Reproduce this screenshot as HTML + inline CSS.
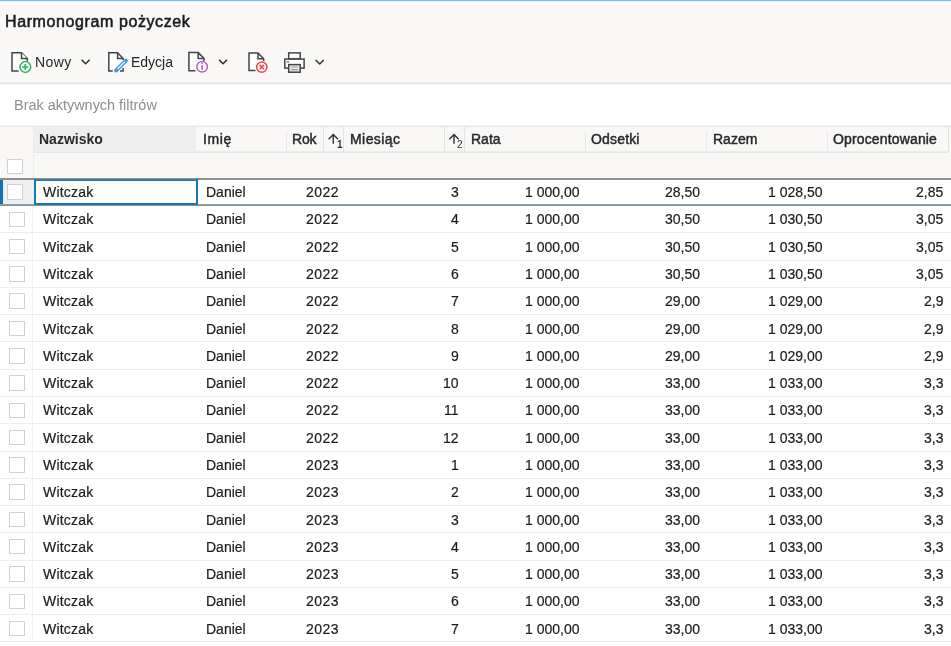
<!DOCTYPE html>
<html><head><meta charset="utf-8"><style>
*{margin:0;padding:0;box-sizing:border-box}
html,body{width:951px;height:646px;overflow:hidden;background:#f9f8f7;font-family:"Liberation Sans",sans-serif;color:#262626}
.a{position:absolute}
.t{position:absolute;white-space:pre;font-size:14px;line-height:16px;will-change:transform}
.r{text-align:right}
.hl{position:absolute;height:1px}
.vl{position:absolute;width:1px}
.cb{position:absolute;width:15.5px;height:15.5px;border:1.5px solid #d0d0d0;background:#fff;border-radius:0.5px}
.hd{font-weight:700;color:#2a2a2a}
.hm{color:#282828;-webkit-text-stroke:0.45px #282828}
.d{transform:scaleY(1.07);transform-origin:0 7.75px;color:#1c1c1c;-webkit-text-stroke:0.2px #1c1c1c}
</style></head>
<body>
<div class="a" style="left:0;top:0;width:951px;height:1px;background:#6fbee6"></div><div class="a" style="left:0;top:1px;width:951px;height:1px;background:#eaf3f8"></div><div class="t" style="left:4.8px;top:13px;font-size:16px;line-height:18px;letter-spacing:0.6px;color:#1b1b1b;-webkit-text-stroke:0.55px #1b1b1b">Harmonogram pożyczek</div><div class="hl" style="left:0;top:82px;width:951px;background:#f0f0ef"></div><div class="hl" style="left:0;top:83px;width:951px;background:#e1e1e1"></div><div class="a" style="left:0;top:84px;width:951px;height:41px;background:#fff"></div><div class="hl" style="left:0;top:84px;width:951px;background:#f7f7f7"></div><div class="t" style="left:14px;top:96.5px;font-size:14.45px;color:#8d8d8d;transform:scaleY(1.07);transform-origin:0 8px">Brak aktywnych filtrów</div><div class="t" style="left:34.5px;top:54px;color:#262626;letter-spacing:0.4px">Nowy</div><div class="t" style="left:131px;top:54px;color:#262626">Edycja</div><div class="hl" style="left:0;top:125px;width:951px;background:#f3f3f3"></div><div class="hl" style="left:0;top:126px;width:951px;background:#e8e8e8"></div><div class="a" style="left:34px;top:127px;width:162px;height:25px;background:#eeeeee"></div><div class="hl" style="left:34px;top:151px;width:914px;background:#ececeb"></div><div class="hl" style="left:34px;top:152px;width:914px;background:#e6e6e6"></div><div class="vl" style="left:33px;top:126px;height:52px;background:#ececec"></div><div class="vl" style="left:286px;top:131px;height:21px;background:#e9e9e9"></div><div class="vl" style="left:585px;top:131px;height:21px;background:#e9e9e9"></div><div class="vl" style="left:706px;top:131px;height:21px;background:#e9e9e9"></div><div class="vl" style="left:827px;top:131px;height:21px;background:#e9e9e9"></div><div class="vl" style="left:323px;top:126px;height:26px;background:#e4e4e4"></div><div class="vl" style="left:343px;top:126px;height:26px;background:#e4e4e4"></div><div class="vl" style="left:444px;top:126px;height:26px;background:#e4e4e4"></div><div class="vl" style="left:464px;top:126px;height:26px;background:#e4e4e4"></div><div class="vl" style="left:948px;top:126px;height:26px;background:#e4e4e4"></div><div class="t hd" style="left:39px;top:131px">Nazwisko</div><div class="t hm" style="left:202.5px;top:131px;letter-spacing:0.65px">Imię</div><div class="t hm" style="left:291.5px;top:131px;letter-spacing:-0.2px">Rok</div><div class="t hm" style="left:349.5px;top:131px;letter-spacing:0.43px">Miesiąc</div><div class="t hm" style="left:470.5px;top:131px;letter-spacing:0px">Rata</div><div class="t hm" style="left:591px;top:131px;letter-spacing:0.17px">Odsetki</div><div class="t hm" style="left:712.5px;top:131px;letter-spacing:0px">Razem</div><div class="t hm" style="left:833px;top:131px;letter-spacing:0.15px">Oprocentowanie</div><div class="cb" style="left:7px;top:158.5px"></div><div class="a" style="left:0;top:178px;width:951px;height:2px;background:#8e8e8e"></div><div class="a" style="left:0;top:180.00px;width:951px;height:25.00px;background:#fff"></div><div class="a" style="left:0;top:180px;width:34px;height:25px;background:#efefef"></div><div class="a" style="left:0;top:180px;width:3px;height:25px;background:#0e75b3"></div><div class="hl" style="left:0;top:204px;width:951px;background:#7fa3b7"></div><div class="hl" style="left:0;top:205px;width:951px;background:#8f8f8f"></div><div class="cb" style="left:7px;top:184.35px"></div><div class="t d" style="left:43px;top:184.20px;letter-spacing:0.2px">Witczak</div><div class="t d" style="left:206px;top:184.20px">Daniel</div><div class="t r d" style="right:611.8px;top:184.20px;letter-spacing:0.45px">2022</div><div class="t r d" style="right:492px;top:184.20px;letter-spacing:0px">3</div><div class="t r d" style="right:371.5px;top:184.20px;letter-spacing:0px">1 000,00</div><div class="t r d" style="right:250.5px;top:184.20px;letter-spacing:0px">28,50</div><div class="t r d" style="right:128.5px;top:184.20px;letter-spacing:0px">1 028,50</div><div class="t r d" style="right:7.5px;top:184.20px;letter-spacing:0px">2,85</div><div class="a" style="left:0;top:206.00px;width:951px;height:26.28px;background:#fff"></div><div class="vl" style="left:32px;top:206.00px;height:26.28px;background:#f3f3f3"></div><div class="hl" style="left:0;top:232.28px;width:951px;background:#ededed"></div><div class="cb" style="left:9px;top:211.63px"></div><div class="t d" style="left:43px;top:211.48px;letter-spacing:0.2px">Witczak</div><div class="t d" style="left:206px;top:211.48px">Daniel</div><div class="t r d" style="right:611.8px;top:211.48px;letter-spacing:0.45px">2022</div><div class="t r d" style="right:492px;top:211.48px;letter-spacing:0px">4</div><div class="t r d" style="right:371.5px;top:211.48px;letter-spacing:0px">1 000,00</div><div class="t r d" style="right:250.5px;top:211.48px;letter-spacing:0px">30,50</div><div class="t r d" style="right:128.5px;top:211.48px;letter-spacing:0px">1 030,50</div><div class="t r d" style="right:7.5px;top:211.48px;letter-spacing:0px">3,05</div><div class="a" style="left:0;top:233.28px;width:951px;height:26.28px;background:#fff"></div><div class="vl" style="left:32px;top:233.28px;height:26.28px;background:#f3f3f3"></div><div class="hl" style="left:0;top:259.56px;width:951px;background:#ededed"></div><div class="cb" style="left:9px;top:238.91px"></div><div class="t d" style="left:43px;top:238.76px;letter-spacing:0.2px">Witczak</div><div class="t d" style="left:206px;top:238.76px">Daniel</div><div class="t r d" style="right:611.8px;top:238.76px;letter-spacing:0.45px">2022</div><div class="t r d" style="right:492px;top:238.76px;letter-spacing:0px">5</div><div class="t r d" style="right:371.5px;top:238.76px;letter-spacing:0px">1 000,00</div><div class="t r d" style="right:250.5px;top:238.76px;letter-spacing:0px">30,50</div><div class="t r d" style="right:128.5px;top:238.76px;letter-spacing:0px">1 030,50</div><div class="t r d" style="right:7.5px;top:238.76px;letter-spacing:0px">3,05</div><div class="a" style="left:0;top:260.56px;width:951px;height:26.28px;background:#fff"></div><div class="vl" style="left:32px;top:260.56px;height:26.28px;background:#f3f3f3"></div><div class="hl" style="left:0;top:286.84px;width:951px;background:#ededed"></div><div class="cb" style="left:9px;top:266.19px"></div><div class="t d" style="left:43px;top:266.04px;letter-spacing:0.2px">Witczak</div><div class="t d" style="left:206px;top:266.04px">Daniel</div><div class="t r d" style="right:611.8px;top:266.04px;letter-spacing:0.45px">2022</div><div class="t r d" style="right:492px;top:266.04px;letter-spacing:0px">6</div><div class="t r d" style="right:371.5px;top:266.04px;letter-spacing:0px">1 000,00</div><div class="t r d" style="right:250.5px;top:266.04px;letter-spacing:0px">30,50</div><div class="t r d" style="right:128.5px;top:266.04px;letter-spacing:0px">1 030,50</div><div class="t r d" style="right:7.5px;top:266.04px;letter-spacing:0px">3,05</div><div class="a" style="left:0;top:287.84px;width:951px;height:26.28px;background:#fff"></div><div class="vl" style="left:32px;top:287.84px;height:26.28px;background:#f3f3f3"></div><div class="hl" style="left:0;top:314.12px;width:951px;background:#ededed"></div><div class="cb" style="left:9px;top:293.47px"></div><div class="t d" style="left:43px;top:293.32px;letter-spacing:0.2px">Witczak</div><div class="t d" style="left:206px;top:293.32px">Daniel</div><div class="t r d" style="right:611.8px;top:293.32px;letter-spacing:0.45px">2022</div><div class="t r d" style="right:492px;top:293.32px;letter-spacing:0px">7</div><div class="t r d" style="right:371.5px;top:293.32px;letter-spacing:0px">1 000,00</div><div class="t r d" style="right:250.5px;top:293.32px;letter-spacing:0px">29,00</div><div class="t r d" style="right:128.5px;top:293.32px;letter-spacing:0px">1 029,00</div><div class="t r d" style="right:7.5px;top:293.32px;letter-spacing:0px">2,9</div><div class="a" style="left:0;top:315.12px;width:951px;height:26.28px;background:#fff"></div><div class="vl" style="left:32px;top:315.12px;height:26.28px;background:#f3f3f3"></div><div class="hl" style="left:0;top:341.40px;width:951px;background:#ededed"></div><div class="cb" style="left:9px;top:320.75px"></div><div class="t d" style="left:43px;top:320.60px;letter-spacing:0.2px">Witczak</div><div class="t d" style="left:206px;top:320.60px">Daniel</div><div class="t r d" style="right:611.8px;top:320.60px;letter-spacing:0.45px">2022</div><div class="t r d" style="right:492px;top:320.60px;letter-spacing:0px">8</div><div class="t r d" style="right:371.5px;top:320.60px;letter-spacing:0px">1 000,00</div><div class="t r d" style="right:250.5px;top:320.60px;letter-spacing:0px">29,00</div><div class="t r d" style="right:128.5px;top:320.60px;letter-spacing:0px">1 029,00</div><div class="t r d" style="right:7.5px;top:320.60px;letter-spacing:0px">2,9</div><div class="a" style="left:0;top:342.40px;width:951px;height:26.28px;background:#fff"></div><div class="vl" style="left:32px;top:342.40px;height:26.28px;background:#f3f3f3"></div><div class="hl" style="left:0;top:368.68px;width:951px;background:#ededed"></div><div class="cb" style="left:9px;top:348.03px"></div><div class="t d" style="left:43px;top:347.88px;letter-spacing:0.2px">Witczak</div><div class="t d" style="left:206px;top:347.88px">Daniel</div><div class="t r d" style="right:611.8px;top:347.88px;letter-spacing:0.45px">2022</div><div class="t r d" style="right:492px;top:347.88px;letter-spacing:0px">9</div><div class="t r d" style="right:371.5px;top:347.88px;letter-spacing:0px">1 000,00</div><div class="t r d" style="right:250.5px;top:347.88px;letter-spacing:0px">29,00</div><div class="t r d" style="right:128.5px;top:347.88px;letter-spacing:0px">1 029,00</div><div class="t r d" style="right:7.5px;top:347.88px;letter-spacing:0px">2,9</div><div class="a" style="left:0;top:369.68px;width:951px;height:26.28px;background:#fff"></div><div class="vl" style="left:32px;top:369.68px;height:26.28px;background:#f3f3f3"></div><div class="hl" style="left:0;top:395.96px;width:951px;background:#ededed"></div><div class="cb" style="left:9px;top:375.31px"></div><div class="t d" style="left:43px;top:375.16px;letter-spacing:0.2px">Witczak</div><div class="t d" style="left:206px;top:375.16px">Daniel</div><div class="t r d" style="right:611.8px;top:375.16px;letter-spacing:0.45px">2022</div><div class="t r d" style="right:492px;top:375.16px;letter-spacing:0px">10</div><div class="t r d" style="right:371.5px;top:375.16px;letter-spacing:0px">1 000,00</div><div class="t r d" style="right:250.5px;top:375.16px;letter-spacing:0px">33,00</div><div class="t r d" style="right:128.5px;top:375.16px;letter-spacing:0px">1 033,00</div><div class="t r d" style="right:7.5px;top:375.16px;letter-spacing:0px">3,3</div><div class="a" style="left:0;top:396.96px;width:951px;height:26.28px;background:#fff"></div><div class="vl" style="left:32px;top:396.96px;height:26.28px;background:#f3f3f3"></div><div class="hl" style="left:0;top:423.24px;width:951px;background:#ededed"></div><div class="cb" style="left:9px;top:402.59px"></div><div class="t d" style="left:43px;top:402.44px;letter-spacing:0.2px">Witczak</div><div class="t d" style="left:206px;top:402.44px">Daniel</div><div class="t r d" style="right:611.8px;top:402.44px;letter-spacing:0.45px">2022</div><div class="t r d" style="right:492px;top:402.44px;letter-spacing:0px">11</div><div class="t r d" style="right:371.5px;top:402.44px;letter-spacing:0px">1 000,00</div><div class="t r d" style="right:250.5px;top:402.44px;letter-spacing:0px">33,00</div><div class="t r d" style="right:128.5px;top:402.44px;letter-spacing:0px">1 033,00</div><div class="t r d" style="right:7.5px;top:402.44px;letter-spacing:0px">3,3</div><div class="a" style="left:0;top:424.24px;width:951px;height:26.28px;background:#fff"></div><div class="vl" style="left:32px;top:424.24px;height:26.28px;background:#f3f3f3"></div><div class="hl" style="left:0;top:450.52px;width:951px;background:#ededed"></div><div class="cb" style="left:9px;top:429.87px"></div><div class="t d" style="left:43px;top:429.72px;letter-spacing:0.2px">Witczak</div><div class="t d" style="left:206px;top:429.72px">Daniel</div><div class="t r d" style="right:611.8px;top:429.72px;letter-spacing:0.45px">2022</div><div class="t r d" style="right:492px;top:429.72px;letter-spacing:0px">12</div><div class="t r d" style="right:371.5px;top:429.72px;letter-spacing:0px">1 000,00</div><div class="t r d" style="right:250.5px;top:429.72px;letter-spacing:0px">33,00</div><div class="t r d" style="right:128.5px;top:429.72px;letter-spacing:0px">1 033,00</div><div class="t r d" style="right:7.5px;top:429.72px;letter-spacing:0px">3,3</div><div class="a" style="left:0;top:451.52px;width:951px;height:26.28px;background:#fff"></div><div class="vl" style="left:32px;top:451.52px;height:26.28px;background:#f3f3f3"></div><div class="hl" style="left:0;top:477.80px;width:951px;background:#ededed"></div><div class="cb" style="left:9px;top:457.15px"></div><div class="t d" style="left:43px;top:457.00px;letter-spacing:0.2px">Witczak</div><div class="t d" style="left:206px;top:457.00px">Daniel</div><div class="t r d" style="right:611.8px;top:457.00px;letter-spacing:0.45px">2023</div><div class="t r d" style="right:492px;top:457.00px;letter-spacing:0px">1</div><div class="t r d" style="right:371.5px;top:457.00px;letter-spacing:0px">1 000,00</div><div class="t r d" style="right:250.5px;top:457.00px;letter-spacing:0px">33,00</div><div class="t r d" style="right:128.5px;top:457.00px;letter-spacing:0px">1 033,00</div><div class="t r d" style="right:7.5px;top:457.00px;letter-spacing:0px">3,3</div><div class="a" style="left:0;top:478.80px;width:951px;height:26.28px;background:#fff"></div><div class="vl" style="left:32px;top:478.80px;height:26.28px;background:#f3f3f3"></div><div class="hl" style="left:0;top:505.08px;width:951px;background:#ededed"></div><div class="cb" style="left:9px;top:484.43px"></div><div class="t d" style="left:43px;top:484.28px;letter-spacing:0.2px">Witczak</div><div class="t d" style="left:206px;top:484.28px">Daniel</div><div class="t r d" style="right:611.8px;top:484.28px;letter-spacing:0.45px">2023</div><div class="t r d" style="right:492px;top:484.28px;letter-spacing:0px">2</div><div class="t r d" style="right:371.5px;top:484.28px;letter-spacing:0px">1 000,00</div><div class="t r d" style="right:250.5px;top:484.28px;letter-spacing:0px">33,00</div><div class="t r d" style="right:128.5px;top:484.28px;letter-spacing:0px">1 033,00</div><div class="t r d" style="right:7.5px;top:484.28px;letter-spacing:0px">3,3</div><div class="a" style="left:0;top:506.08px;width:951px;height:26.28px;background:#fff"></div><div class="vl" style="left:32px;top:506.08px;height:26.28px;background:#f3f3f3"></div><div class="hl" style="left:0;top:532.36px;width:951px;background:#ededed"></div><div class="cb" style="left:9px;top:511.71px"></div><div class="t d" style="left:43px;top:511.56px;letter-spacing:0.2px">Witczak</div><div class="t d" style="left:206px;top:511.56px">Daniel</div><div class="t r d" style="right:611.8px;top:511.56px;letter-spacing:0.45px">2023</div><div class="t r d" style="right:492px;top:511.56px;letter-spacing:0px">3</div><div class="t r d" style="right:371.5px;top:511.56px;letter-spacing:0px">1 000,00</div><div class="t r d" style="right:250.5px;top:511.56px;letter-spacing:0px">33,00</div><div class="t r d" style="right:128.5px;top:511.56px;letter-spacing:0px">1 033,00</div><div class="t r d" style="right:7.5px;top:511.56px;letter-spacing:0px">3,3</div><div class="a" style="left:0;top:533.36px;width:951px;height:26.28px;background:#fff"></div><div class="vl" style="left:32px;top:533.36px;height:26.28px;background:#f3f3f3"></div><div class="hl" style="left:0;top:559.64px;width:951px;background:#ededed"></div><div class="cb" style="left:9px;top:538.99px"></div><div class="t d" style="left:43px;top:538.84px;letter-spacing:0.2px">Witczak</div><div class="t d" style="left:206px;top:538.84px">Daniel</div><div class="t r d" style="right:611.8px;top:538.84px;letter-spacing:0.45px">2023</div><div class="t r d" style="right:492px;top:538.84px;letter-spacing:0px">4</div><div class="t r d" style="right:371.5px;top:538.84px;letter-spacing:0px">1 000,00</div><div class="t r d" style="right:250.5px;top:538.84px;letter-spacing:0px">33,00</div><div class="t r d" style="right:128.5px;top:538.84px;letter-spacing:0px">1 033,00</div><div class="t r d" style="right:7.5px;top:538.84px;letter-spacing:0px">3,3</div><div class="a" style="left:0;top:560.64px;width:951px;height:26.28px;background:#fff"></div><div class="vl" style="left:32px;top:560.64px;height:26.28px;background:#f3f3f3"></div><div class="hl" style="left:0;top:586.92px;width:951px;background:#ededed"></div><div class="cb" style="left:9px;top:566.27px"></div><div class="t d" style="left:43px;top:566.12px;letter-spacing:0.2px">Witczak</div><div class="t d" style="left:206px;top:566.12px">Daniel</div><div class="t r d" style="right:611.8px;top:566.12px;letter-spacing:0.45px">2023</div><div class="t r d" style="right:492px;top:566.12px;letter-spacing:0px">5</div><div class="t r d" style="right:371.5px;top:566.12px;letter-spacing:0px">1 000,00</div><div class="t r d" style="right:250.5px;top:566.12px;letter-spacing:0px">33,00</div><div class="t r d" style="right:128.5px;top:566.12px;letter-spacing:0px">1 033,00</div><div class="t r d" style="right:7.5px;top:566.12px;letter-spacing:0px">3,3</div><div class="a" style="left:0;top:587.92px;width:951px;height:26.28px;background:#fff"></div><div class="vl" style="left:32px;top:587.92px;height:26.28px;background:#f3f3f3"></div><div class="hl" style="left:0;top:614.20px;width:951px;background:#ededed"></div><div class="cb" style="left:9px;top:593.55px"></div><div class="t d" style="left:43px;top:593.40px;letter-spacing:0.2px">Witczak</div><div class="t d" style="left:206px;top:593.40px">Daniel</div><div class="t r d" style="right:611.8px;top:593.40px;letter-spacing:0.45px">2023</div><div class="t r d" style="right:492px;top:593.40px;letter-spacing:0px">6</div><div class="t r d" style="right:371.5px;top:593.40px;letter-spacing:0px">1 000,00</div><div class="t r d" style="right:250.5px;top:593.40px;letter-spacing:0px">33,00</div><div class="t r d" style="right:128.5px;top:593.40px;letter-spacing:0px">1 033,00</div><div class="t r d" style="right:7.5px;top:593.40px;letter-spacing:0px">3,3</div><div class="a" style="left:0;top:615.20px;width:951px;height:26.28px;background:#fff"></div><div class="vl" style="left:32px;top:615.20px;height:26.28px;background:#f3f3f3"></div><div class="hl" style="left:0;top:641.48px;width:951px;background:#ededed"></div><div class="cb" style="left:9px;top:620.83px"></div><div class="t d" style="left:43px;top:620.68px;letter-spacing:0.2px">Witczak</div><div class="t d" style="left:206px;top:620.68px">Daniel</div><div class="t r d" style="right:611.8px;top:620.68px;letter-spacing:0.45px">2023</div><div class="t r d" style="right:492px;top:620.68px;letter-spacing:0px">7</div><div class="t r d" style="right:371.5px;top:620.68px;letter-spacing:0px">1 000,00</div><div class="t r d" style="right:250.5px;top:620.68px;letter-spacing:0px">33,00</div><div class="t r d" style="right:128.5px;top:620.68px;letter-spacing:0px">1 033,00</div><div class="t r d" style="right:7.5px;top:620.68px;letter-spacing:0px">3,3</div><div class="a" style="left:0;top:642.48px;width:951px;height:10px;background:#fff"></div><div class="a" style="left:34px;top:179px;width:164px;height:26px;border:2px solid #1479b6"></div><div class="hl" style="left:36px;top:179px;width:160px;background:#4f7d98"></div>

<svg class="a" style="left:0;top:0" width="951" height="180" viewBox="0 0 951 180" fill="none">
 <g stroke="#444" stroke-width="1.5">
  <!-- Nowy doc -->
  <path d="M18.6 71H12V52.7H21.5L27.3 58.5V61" fill="#fff"/>
  <path d="M21.5 52.7V58.5H27.3" fill="#fff"/>
  <!-- Edycja doc -->
  <path d="M112.7 71H108.8V52.8H117.6L123.1 58.5V60" fill="#fff"/>
  <path d="M117.6 52.8V58.5H123.1"/>
  <path d="M123.1 68V71H120"/>
  <!-- Info doc -->
  <path d="M195.5 70.8H188.9V52.6H198.2L204 58.4V61" fill="#fff"/>
  <path d="M198.2 52.6V58.4H204"/>
  <!-- Delete doc -->
  <path d="M255.5 70.6H249V53.1H258L263.7 58.8V61" fill="#fff"/>
  <path d="M258 53.1V58.8H263.7"/>
  <!-- printer -->
  <rect x="288.7" y="52.9" width="11.5" height="6" fill="#fff"/>
  <rect x="284.8" y="59.1" width="19.3" height="9" fill="#fff"/>
  <rect x="288.7" y="64.6" width="11.5" height="7.6" fill="#ececec"/>
 </g>
 <path d="M291 67H298M291 69.6H298" stroke="#9a9a9a" stroke-width="1.2"/>
 <rect x="286.6" y="61" width="2.6" height="1.8" fill="#4aa3e0"/>
 <!-- circles -->
 <circle cx="25.3" cy="67" r="5.4" stroke="#2fb35f" stroke-width="1.5" fill="#fff"/>
 <path d="M22.2 67H28.4M25.3 63.9V70.1" stroke="#2fb35f" stroke-width="1.7"/>
 <circle cx="202.1" cy="66.8" r="5.3" stroke="#b160c6" stroke-width="1.5" fill="#fff"/>
 <path d="M202.1 65.3V70" stroke="#b160c6" stroke-width="1.6"/>
 <circle cx="202.1" cy="63.3" r="0.9" fill="#b160c6"/>
 <circle cx="261.8" cy="67.1" r="5.2" stroke="#e8454d" stroke-width="1.5" fill="#fff"/>
 <path d="M259.6 64.9L264 69.3M264 64.9L259.6 69.3" stroke="#e8454d" stroke-width="1.5"/>
 <!-- pencil -->
 <path d="M116.3 70.3L125.9 60.6" stroke="#3a9ad9" stroke-width="3.9" stroke-linecap="round"/>
 <path d="M114.4 72.4L114.9 68.9L117.8 71.8Z" fill="#3a9ad9"/>
 <path d="M117.4 69.2L125 61.5" stroke="#fff" stroke-width="1.3" stroke-opacity="0.85"/>
 <!-- chevrons -->
 <g stroke="#303030" stroke-width="1.5">
  <path d="M81.6 59.8L85.6 63.8L89.6 59.8"/>
  <path d="M219.2 59.9L223.1 63.8L227 59.9"/>
  <path d="M315.7 60L319.7 64L323.7 60"/>
 </g>
 <!-- sort arrows -->
 <g stroke="#333" stroke-width="1.4">
  <path d="M333.3 134.6V143.8M328.6 139.2L333.3 134.5L338 139.2"/>
  <path d="M454 134.6V143.8M449.3 139.2L454 134.5L458.7 139.2"/>
 </g>
</svg>
<div class="t" style="left:337px;top:139px;font-size:10px;line-height:11px;font-weight:700;color:#333">1</div>
<div class="t" style="left:457px;top:139px;font-size:10px;line-height:11px;color:#333">2</div>

</body></html>
